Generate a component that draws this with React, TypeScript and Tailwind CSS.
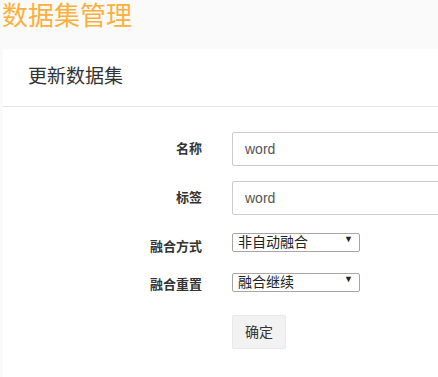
import { useState } from "react";

const font = { fontFamily: '"Liberation Sans", "Noto Sans CJK SC", sans-serif' };

function App() {
  const [name, setName] = useState("word");
  const [tag, setTag] = useState("word");
  const [mode, setMode] = useState("非自动融合");
  const [reset, setReset] = useState("融合继续");

  return (
    <div
      className="min-h-[377px] w-[438px] overflow-hidden bg-[#fafafa] text-[#333]"
      style={font}
    >
      <h1 className="h-[49px] pl-[2px] pt-[1px] text-[26px] leading-[30px] font-normal text-[#fbb03b]">
        数据集管理
      </h1>

      <div className="ml-[3px] w-[600px] bg-white pb-[40px]">
        <div className="flex h-[58px] items-center border-b border-[#e5e5e5] pl-[25px] text-[19px]">
          更新数据集
        </div>

        <div className="pt-[25px]">
          <div className="flex items-center">
            <label className="w-[199px] text-right text-[13px] font-bold">名称</label>
            <input
              value={name}
              onChange={(e) => setName(e.target.value)}
              className="ml-[30px] h-[34px] w-[300px] rounded-[2px] border border-[#ccc] px-[12px] text-[14px] text-[#555] outline-none"
            />
          </div>

          <div className="mt-[15px] flex items-center">
            <label className="w-[199px] text-right text-[13px] font-bold">标签</label>
            <input
              value={tag}
              onChange={(e) => setTag(e.target.value)}
              className="ml-[30px] h-[34px] w-[300px] rounded-[2px] border border-[#ccc] px-[12px] text-[14px] text-[#555] outline-none"
            />
          </div>

          <div className="mt-[15px] flex items-start">
            <label className="w-[199px] text-right text-[13px] leading-[34px] font-bold">
              融合方式
            </label>
            <div className="relative ml-[30px]">
              <select
                value={mode}
                onChange={(e) => setMode(e.target.value)}
                className="h-[19px] w-[128px] appearance-none rounded-[2px] border border-[#a6a6a6] bg-white pl-[5px] text-[14px] leading-[17px] text-[#222] outline-none"
              >
                <option>非自动融合</option>
                <option>自动融合</option>
              </select>
              <span className="pointer-events-none absolute right-[7px] top-[3px] text-[9px] leading-[12px] text-[#222]">
                ▼
              </span>
            </div>
          </div>

          <div className="mt-[6px] flex items-start">
            <label className="w-[199px] text-right text-[13px] leading-[30px] font-bold">
              融合重置
            </label>
            <div className="relative ml-[30px]">
              <select
                value={reset}
                onChange={(e) => setReset(e.target.value)}
                className="h-[19px] w-[128px] appearance-none rounded-[2px] border border-[#a6a6a6] bg-white pl-[5px] text-[14px] leading-[17px] text-[#222] outline-none"
              >
                <option>融合继续</option>
                <option>融合重置</option>
              </select>
              <span className="pointer-events-none absolute right-[7px] top-[3px] text-[9px] leading-[12px] text-[#222]">
                ▼
              </span>
            </div>
          </div>

          <div className="mt-[15px] pl-[229px]">
            <button className="h-[34px] w-[54px] rounded-[2px] border border-[#e8e8e8] bg-[#f2f2f2] text-[14px] text-[#333]">
              确定
            </button>
          </div>
        </div>
      </div>
    </div>
  );
}

export default App;
